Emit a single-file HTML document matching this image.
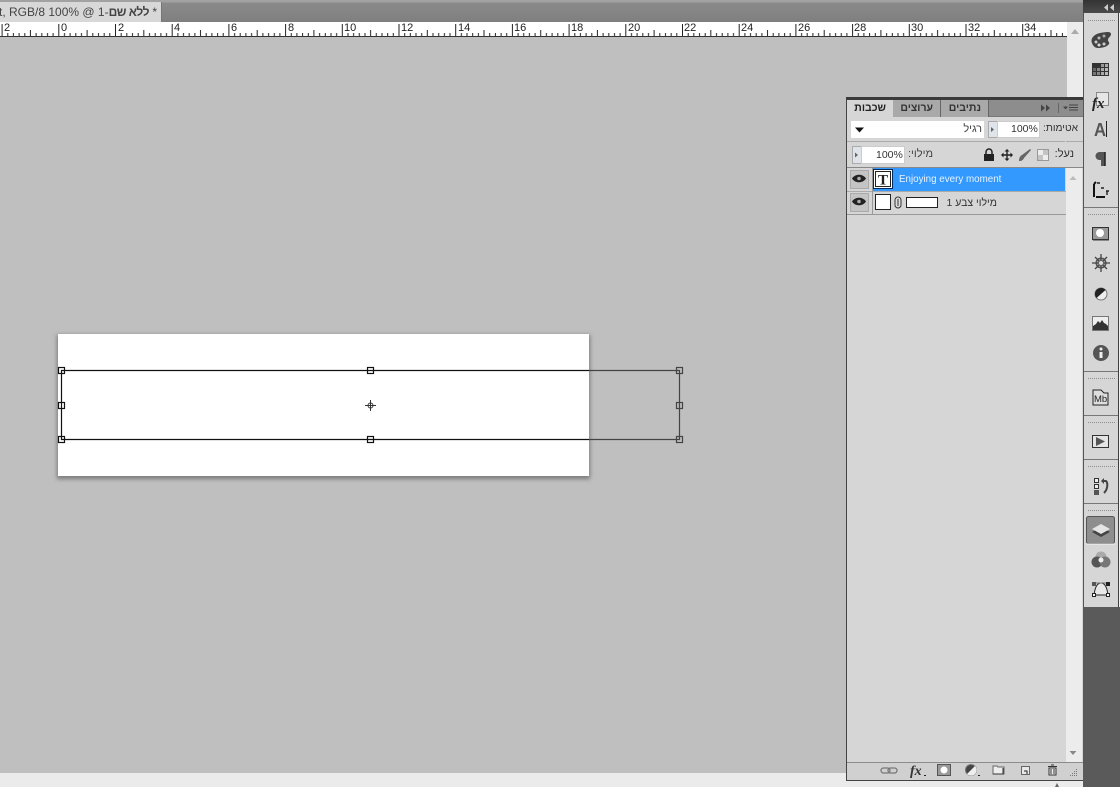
<!DOCTYPE html>
<html lang="en"><head><meta charset="utf-8"><title>Photoshop</title>
<style>
html,body{margin:0;padding:0;width:1120px;height:787px;overflow:hidden;background:#bfbfbf}
body{position:relative;font-family:"Liberation Sans","DejaVu Sans",sans-serif;font-size:11px;color:#333}
div{position:absolute;box-sizing:border-box}
.t{white-space:nowrap;line-height:14px}
.r{direction:rtl;text-align:right}
svg{position:absolute;left:0;top:0}
.n{top:21px;color:#222}
</style></head><body>
<div style="left:0;top:0;width:1083px;height:22px;background:linear-gradient(#a2a2a2 0,#a2a2a2 2px,#8a8a8a 3px,#7f7f7f 100%)"></div>
<div style="left:0;top:2px;width:162px;height:20px;background:#d8d8d8;border-right:1px solid #777"></div>
<div class="t" style="left:-1px;top:5px;font-size:12px;color:#444;direction:ltr;unicode-bidi:embed">t, RGB/8 100% @ 1-<span style="unicode-bidi:isolate;direction:rtl;font-weight:bold;letter-spacing:-.5px">ללא שם</span> *</div>
<div style="left:0;top:22px;width:1067px;height:15px;background:#fff;border-bottom:1px solid #333"></div>
<div style="left:1067px;top:22px;width:16px;height:751px;background:#ececec"></div>
<div style="left:0;top:773px;width:1083px;height:14px;background:#ebebeb"></div>
<div style="left:58px;top:334px;width:531px;height:142px;background:#fff;box-shadow:0 2px 4px 1px rgba(70,70,70,.55)"></div>
<div class="t n" style="left:4px">2</div><div class="t n" style="left:61px">0</div><div class="t n" style="left:118px">2</div><div class="t n" style="left:174px">4</div><div class="t n" style="left:231px">6</div><div class="t n" style="left:288px">8</div><div class="t n" style="left:344px">10</div><div class="t n" style="left:401px">12</div><div class="t n" style="left:458px">14</div><div class="t n" style="left:514px">16</div><div class="t n" style="left:571px">18</div><div class="t n" style="left:628px">20</div><div class="t n" style="left:684px">22</div><div class="t n" style="left:741px">24</div><div class="t n" style="left:798px">26</div><div class="t n" style="left:854px">28</div><div class="t n" style="left:911px">30</div><div class="t n" style="left:968px">32</div><div class="t n" style="left:1024px">34</div>
<!-- panel -->
<div style="left:846px;top:97px;width:237px;height:684px;background:#d6d6d6;border:1px solid #444;border-top:3px solid #3a3a3a;border-right:0"></div>
<div style="left:847px;top:100px;width:236px;height:17px;background:#8d8d8d;border-bottom:1px solid #777"></div>
<div style="left:847px;top:100px;width:46px;height:18px;background:#d6d6d6"></div>
<div style="left:893px;top:100px;width:48px;height:17px;background:#a9a9a9;border-right:1px solid #666"></div>
<div style="left:941px;top:100px;width:48px;height:17px;background:#a9a9a9;border-right:1px solid #666"></div>
<div class="t r" style="left:848px;width:38px;top:101px;font-weight:bold;font-size:10.5px;color:#222">שכבות</div>
<div class="t r" style="left:893px;width:40px;top:101px;font-weight:bold;font-size:10.5px;color:#333">ערוצים</div>
<div class="t r" style="left:941px;width:40px;top:101px;font-weight:bold;font-size:10.5px;color:#333">נתיבים</div>
<div style="left:851px;top:121px;width:133px;height:17px;background:#fff"></div>
<div class="t r" style="left:900px;width:82px;top:122px;color:#444">רגיל</div>
<div style="left:988px;top:121px;width:10px;height:17px;background:#dfe3ea;border:1px solid #aaa"></div>
<div style="left:997px;top:121px;width:43px;height:17px;background:#fff;border:1px solid #ccc"></div>
<div class="t" style="left:1011px;top:122px;color:#333;font-size:10.5px">100%</div>
<div class="t r" style="left:1030px;width:48px;top:122px;color:#333;font-size:10.2px">אטימות:</div>
<div style="left:847px;top:141px;width:218px;height:1px;background:#aaa"></div>
<div style="left:1066px;top:141px;width:17px;height:1px;background:#aaa"></div>
<div class="t r" style="left:1040px;width:34px;top:147px;color:#333">נעל:</div>
<div style="left:852px;top:146px;width:10px;height:18px;background:#dfe3ea;border:1px solid #aaa"></div>
<div style="left:861px;top:146px;width:44px;height:18px;background:#fff;border:1px solid #ccc"></div>
<div class="t" style="left:876px;top:148px;color:#333;font-size:10.5px">100%</div>
<div class="t r" style="left:900px;width:33px;top:147px;color:#444">מילוי:</div>
<div style="left:847px;top:167px;width:236px;height:1px;background:#888"></div>
<div style="left:1066px;top:168px;width:16px;height:594px;background:#ececec"></div>
<div style="left:873px;top:168px;width:192px;height:23px;background:#3399ff"></div>
<div class="t" style="left:899px;top:173px;width:110px;font-size:9.8px;color:#e8f3ff">Enjoying every moment</div>
<div style="left:847px;top:191px;width:219px;height:1px;background:#aaa"></div>
<div style="left:847px;top:214px;width:219px;height:1px;background:#999"></div>
<div style="left:872px;top:168px;width:1px;height:46px;background:#999"></div>
<div class="t r" style="left:930px;width:67px;top:196px;color:#333;font-size:10.5px">מילוי צבע 1</div>
<div style="left:847px;top:762px;width:236px;height:1px;background:#8c8c8c"></div>
<div style="left:847px;top:763px;width:236px;height:17px;background:#d0d0d0"></div>
<!-- dock -->
<div style="left:1083px;top:0;width:37px;height:787px;background:#5a5a5a"></div>
<div style="left:1083px;top:0;width:37px;height:13px;background:linear-gradient(#333,#4b4b4b)"></div>
<div style="left:1083px;top:13px;width:35px;height:594px;background:#d6d6d6"></div>
<div style="left:1118px;top:13px;width:1px;height:594px;background:#3f3f3f"></div>
<div style="left:1119px;top:13px;width:1px;height:594px;background:#f0f0f0"></div>
<div style="left:1083px;top:13px;width:1px;height:594px;background:#555"></div>
<svg width="1120" height="787" viewBox="0 0 1120 787" xmlns="http://www.w3.org/2000/svg">
<defs>
<pattern id="tk" x="1.6" y="24" width="56.7" height="12" patternUnits="userSpaceOnUse">
<path d="M.5 0V12M6.2 9V12M11.8 9V12M17.5 9V12M23.2 9V12M28.8 6V12M34.5 9V12M40.2 9V12M45.9 9V12M51.5 9V12" stroke="#222" stroke-width="1" fill="none"/>
</pattern>
<pattern id="dt" width="2" height="2" patternUnits="userSpaceOnUse"><rect width="1" height="1" fill="#8e8e8e"/></pattern>
</defs>
<rect x="0" y="24" width="1067" height="12" fill="url(#tk)"/>
<path d="M1071 34l4-5 4 5z" fill="#aaa"/>
<path d="M1041 104.500l4 3.500-4 3.500zM1046 104.500l4 3.500-4 3.500z" fill="#444"/>
<path d="M1058.500 103v10" stroke="#666"/>
<path d="M1063 106.500h5l-2.500 3z" fill="#444"/>
<path d="M1069 105h9M1069 107.500h9M1069 110h9" stroke="#444"/>
<path d="M855 127.500h9l-4.500 5z" fill="#111"/>
<path d="M991 127l3 2.500-3 2.500z" fill="#666"/><path d="M855 152.500l3 2.500-3 2.500z" fill="#666"/>
<!-- locks -->
<rect x="1037.500" y="149.500" width="11" height="11" fill="#c4c4c4" stroke="#999"/><path d="M1038 150h5v5h-5zM1043 155h5v5h-5z" fill="#eee"/>
<path d="M1019 161c3 0 4-1 5-3l7-8-1-1-8 6c-2 1-3 3-3 6z" fill="#666"/>
<path d="M1002 155h10M1007 150v10" stroke="#222" stroke-width="1.400"/><path d="M1001 155l2.500-2.500v5zM1013 155l-2.500-2.500v5zM1007 149l-2.500 2.500h5zM1007 161l-2.500-2.500h5z" fill="#222"/>
<rect x="984" y="154" width="10" height="7" fill="#222"/><path d="M986 154v-2a3 3 0 016 0v2" fill="none" stroke="#222" stroke-width="1.500"/>
<!-- layer rows -->
<rect x="850.500" y="170.500" width="18" height="18" fill="#c4c4c4" stroke="#aaa"/><rect x="850.500" y="193.500" width="18" height="18" fill="#c4c4c4" stroke="#aaa"/>
<path d="M852 178.500c3-5 11-5 14 0-3 5-11 5-14 0z" fill="#222"/><circle cx="859" cy="178.500" r="1.800" fill="#aaa"/>
<path d="M852 201.500c3-5 11-5 14 0-3 5-11 5-14 0z" fill="#222"/><circle cx="859" cy="201.500" r="1.800" fill="#aaa"/>
<rect x="873.500" y="169.500" width="19" height="19" fill="#fff" stroke="#02275a"/><rect x="875.500" y="171.500" width="15" height="15" fill="#fff" stroke="#222"/>
<text x="883" y="184.500" font-family="Liberation Serif,serif" font-size="15" font-weight="bold" text-anchor="middle" fill="#222">T</text>
<rect x="875.500" y="194.500" width="15" height="15" fill="#fff" stroke="#222"/>
<rect x="895" y="197" width="6" height="11" rx="3" fill="#ddd" stroke="#333"/><path d="M898 199v7" stroke="#333"/>
<rect x="906.500" y="197.500" width="31" height="10" fill="#fff" stroke="#222"/>
<path d="M1069.500 180l3.500-4 3.500 4z" fill="#bbb"/><path d="M1069.500 751l3.500 4 3.500-4z" fill="#888"/>
<!-- bottom panel -->
<g fill="none" stroke="#777" stroke-width="1.300"><rect x="881" y="768" width="9" height="5" rx="2.500"/><rect x="888" y="768" width="9" height="5" rx="2.500"/></g>
<text x="910" y="775" font-family="Liberation Serif,serif" font-style="italic" font-weight="bold" font-size="14" fill="#333">fx</text><rect x="924" y="775" width="2" height="1" fill="#222"/>
<rect x="937.500" y="764.500" width="13" height="11" fill="#999" stroke="#555"/><circle cx="944" cy="770" r="3.500" fill="#fff"/>
<circle cx="971" cy="770" r="5.500" fill="#444" stroke="#777"/><path d="M975 766a5.500 5.500 0 01-8 8z" fill="#eee"/><rect x="978" y="775" width="2" height="1" fill="#222"/>
<path d="M993 766h4l1 1h6v7h-11z" fill="#eee" stroke="#666"/><path d="M1003 768v6h-10" stroke="#333" fill="none"/>
<rect x="1021.500" y="766.500" width="8" height="8" fill="#e8e8e8" stroke="#666"/><path d="M1024 771h3v3" stroke="#222" fill="none"/>
<path d="M1049 768h7v7h-7zM1048 766.500h9M1051 765h3" fill="#eee" stroke="#333"/><path d="M1051 769v5M1054 769v5" stroke="#333"/>
<path d="M1076 769h1v1h-1zM1074 771h1v1h-1zM1076 771h1v1h-1zM1072 773h1v1h-1zM1074 773h1v1h-1zM1076 773h1v1h-1zM1070 775h1v1h-1zM1072 775h1v1h-1zM1074 775h1v1h-1zM1076 775h1v1h-1z" fill="#777"/>
<path d="M1055 787l2-4 2 4z" fill="#666"/>
<path d="M1108 4l-4 3.500 4 3.500zM1114 4l-4 3.500 4 3.500z" fill="#ccc"/>
<!-- transform box -->
<path d="M61 370.500H589M61 439.500H589M61.500 370V440" stroke="#111" stroke-width="1.200" fill="none"/>
<path d="M589 370.500H680M589 439.500H680M679.500 370V440" stroke="#444" stroke-width="1.200" fill="none"/>
<g fill="none" stroke="#111" stroke-width="1.200"><rect x="58.500" y="367.500" width="6" height="6"/><rect x="58.500" y="402.500" width="6" height="6"/><rect x="58.500" y="436.500" width="6" height="6"/><rect x="367.500" y="367.500" width="6" height="6"/><rect x="367.500" y="436.500" width="6" height="6"/></g>
<g fill="none" stroke="#444" stroke-width="1.200"><rect x="676.500" y="367.500" width="6" height="6"/><rect x="676.500" y="402.500" width="6" height="6"/><rect x="676.500" y="436.500" width="6" height="6"/></g>
<circle cx="370.500" cy="405.500" r="2.500" fill="#fff" stroke="#333"/><path d="M370.500 400v11M365 405.500h11" stroke="#333"/>
<!-- dock separators -->
<path d="M1084 207.500h34M1084 371.500h34M1084 415.500h34M1084 459.500h34M1084 503.500h34" stroke="#777"/>
<rect x="1087" y="19" width="28" height="2" fill="url(#dt)"/><rect x="1087" y="213" width="28" height="2" fill="url(#dt)"/><rect x="1087" y="377" width="28" height="2" fill="url(#dt)"/><rect x="1087" y="421" width="28" height="2" fill="url(#dt)"/><rect x="1087" y="465" width="28" height="2" fill="url(#dt)"/><rect x="1087" y="509" width="28" height="2" fill="url(#dt)"/>
<!-- palette -->
<path d="M1092 43c-2-5 3-9 8-10 5-1 11-2 11 1 0 3-3 3-3 6 0 2 2 2 1 4-2 3-7 4-11 4-3 0-5-2-6-5z" fill="#444"/>
<circle cx="1096" cy="42" r="1.500" fill="#ccc"/><circle cx="1099" cy="38" r="1.500" fill="#bbb"/><circle cx="1104" cy="36" r="1.500" fill="#aaa"/><circle cx="1099" cy="45" r="1.500" fill="#ddd"/><circle cx="1104" cy="44" r="1.500" fill="#ccc"/>
<!-- grid -->
<rect x="1092" y="63" width="17" height="13" fill="#333"/>
<rect x="1093" y="68" width="3" height="3" fill="#666"/><rect x="1093" y="72" width="3" height="3" fill="#777"/><rect x="1097" y="68" width="3" height="3" fill="#888"/><rect x="1097" y="72" width="3" height="3" fill="#888"/><rect x="1101" y="64" width="3" height="3" fill="#999"/><rect x="1105" y="64" width="3" height="3" fill="#aaa"/><rect x="1101" y="68" width="3" height="3" fill="#aaa"/><rect x="1105" y="68" width="3" height="3" fill="#bbb"/><rect x="1101" y="72" width="3" height="3" fill="#aaa"/><rect x="1105" y="72" width="3" height="3" fill="#bbb"/>
<!-- fx -->
<rect x="1096.500" y="92.500" width="12" height="13" fill="#e6e6e6" stroke="#888"/>
<text x="1092" y="108" font-family="Liberation Serif,serif" font-style="italic" font-weight="bold" font-size="15" fill="#222">fx</text>
<!-- A| -->
<text x="1094" y="136" font-family="Liberation Sans,sans-serif" font-size="18" font-weight="bold" fill="#555" textLength="12" lengthAdjust="spacingAndGlyphs">A</text><path d="M1106.500 121v16" stroke="#222"/>
<!-- pilcrow -->
<path d="M1105 152h-5a4 4 0 00-1 8h2v6h4z" fill="#555"/><path d="M1105 152v14" stroke="#222" stroke-width="1.500"/>
<!-- char -->
<path d="M1094 184v13M1094 184l2-2M1096 197h9" stroke="#111" stroke-width="2" fill="none"/><path d="M1097 183h3M1101 188h3M1106 191h3M1107 195v-4" stroke="#222" stroke-width="1.400" fill="none"/>
<!-- mask -->
<rect x="1092.500" y="227.500" width="16" height="12" fill="#999" stroke="#333"/><circle cx="1100" cy="233" r="4" fill="#fff"/><path d="M1093 240.500h16" stroke="#888"/>
<!-- wheel -->
<circle cx="1101" cy="263" r="5" fill="#999" stroke="#444"/><path d="M1092 263h18M1101 254v18M1095 257l12 12M1107 257l-12 12" stroke="#444" stroke-width="1.300"/><circle cx="1101" cy="263" r="2" fill="#ddd"/>
<!-- adj -->
<circle cx="1101" cy="294" r="6" fill="#eee" stroke="#777"/><path d="M1105.500 290a6 6 0 00-9 8z" fill="#222"/>
<!-- hist -->
<rect x="1092.500" y="316.500" width="16" height="14" fill="#eee" stroke="#777"/><path d="M1093 330v-4l3-2 2-3 2 2 2-3 2 3 2 1 2 2v4z" fill="#333"/>
<!-- info -->
<circle cx="1101" cy="353" r="8" fill="#555"/><circle cx="1101" cy="349" r="1.500" fill="#eee"/><rect x="1099.500" y="352" width="3" height="6" fill="#eee"/>
<!-- Mb -->
<path d="M1093 390h8l3 3h4v12h-15z" fill="#ddd" stroke="#222"/>
<text x="1094" y="402" font-family="Liberation Sans,sans-serif" font-size="9.500" fill="#222">Mb</text>
<!-- play -->
<rect x="1092.500" y="435.500" width="16" height="12" fill="#e4e4e4" stroke="#333"/><path d="M1096 437l9 4.500-9 4.500z" fill="#555"/>
<!-- history -->
<rect x="1094.500" y="478.500" width="4" height="4" fill="#eee" stroke="#333"/><rect x="1094.500" y="484.500" width="4" height="4" fill="#eee" stroke="#333"/><rect x="1094" y="490" width="5" height="5" fill="#555"/>
<path d="M1103 481h3c2 2 2 8-2 12" fill="none" stroke="#444" stroke-width="2"/><path d="M1101 481l3-3v6z" fill="#444"/>
<!-- layers active -->
<rect x="1086.500" y="516.500" width="28" height="27" rx="2" fill="#8e8e8e" stroke="#555"/><path d="M1086 544h29" stroke="#f2f2f2"/>
<path d="M1092 532l9-5 9 5-9 5z" fill="#444"/><path d="M1092 529l9-5 9 5-9 5z" fill="#e4e4e4"/>
<!-- channels -->
<circle cx="1101" cy="557" r="5.500" fill="#aaa"/><circle cx="1097" cy="562" r="5.500" fill="#555"/><circle cx="1105" cy="562" r="5.500" fill="#777"/><circle cx="1101" cy="560" r="2.500" fill="#eee"/>
<!-- paths -->
<path d="M1094 595c1-8 3-12 7-12s6 4 7 12h-14" fill="#e8e8e8" stroke="#222"/><path d="M1094 583h14" stroke="#777"/>
<rect x="1092" y="582" width="4" height="4" fill="#555"/><rect x="1106" y="582" width="4" height="4" fill="#222"/><rect x="1092.500" y="593.500" width="3" height="3" fill="#fff" stroke="#222"/><rect x="1106.500" y="593.500" width="3" height="3" fill="#fff" stroke="#222"/>
</svg>
</body></html>
